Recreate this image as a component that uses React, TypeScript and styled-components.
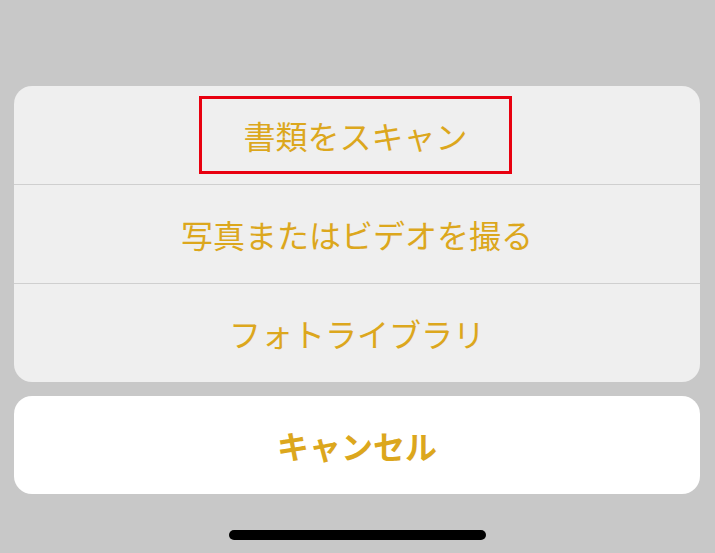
import React from "react";
import styled, { createGlobalStyle } from "styled-components";

const GlobalStyle = createGlobalStyle`
  html, body { margin: 0; padding: 0; }
  body { background: #c8c8c8; font-family: "Noto Sans CJK JP", "Noto Sans", sans-serif; }
`;

const Screen = styled.div`
  width: 715px;
  height: 553px;
  box-sizing: border-box;
  padding: 86px 15px 0 14px;
  display: flex;
  flex-direction: column;
  background: #c8c8c8;
  overflow: hidden;
`;

const Group = styled.div<{ $cancel?: boolean }>`
  display: flex;
  flex-direction: column;
  border-radius: 18px;
  overflow: hidden;
  background: ${(p) => (p.$cancel ? "#ffffff" : "#efefef")};
  margin-top: ${(p) => (p.$cancel ? "14px" : "0")};
`;

const Row = styled.div`
  height: 98px;
  display: flex;
  align-items: center;
  justify-content: center;
  & + & { border-top: 1px solid #cfcfcf; }
`;

const Label = styled.span<{ $bold?: boolean }>`
  color: #dca71d;
  font-size: 32px;
  font-weight: ${(p) => (p.$bold ? 700 : 400)};
  line-height: 1;
  white-space: nowrap;
`;

const Highlight = styled.div`
  width: 313px;
  height: 78px;
  box-sizing: border-box;
  border: 3px solid #e8000f;
  display: flex;
  align-items: center;
  justify-content: center;
  margin-left: -3px;
`;

const HomeArea = styled.div`
  flex: 1;
  display: flex;
  justify-content: center;
  padding-top: 36px;
  margin-left: -14px;
  margin-right: -15px;
`;

const HomeIndicator = styled.div`
  width: 257px;
  height: 10px;
  border-radius: 5px;
  background: #000;
`;

export default function App() {
  return (
    <>
      <GlobalStyle />
      <Screen>
        <Group>
          <Row>
            <Highlight>
              <Label>書類をスキャン</Label>
            </Highlight>
          </Row>
          <Row>
            <Label>写真またはビデオを撮る</Label>
          </Row>
          <Row>
            <Label>フォトライブラリ</Label>
          </Row>
        </Group>
        <Group $cancel>
          <Row>
            <Label $bold>キャンセル</Label>
          </Row>
        </Group>
        <HomeArea>
          <HomeIndicator />
        </HomeArea>
      </Screen>
    </>
  );
}
